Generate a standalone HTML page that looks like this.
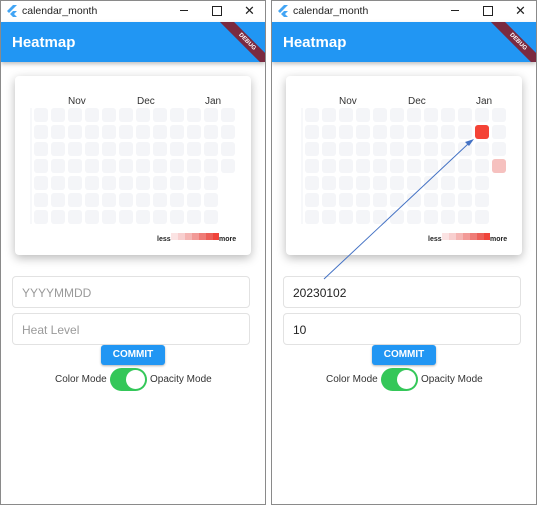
<!DOCTYPE html>
<html><head><style>
*{margin:0;padding:0;box-sizing:border-box}
body{width:540px;height:505px;background:#fff;position:relative;overflow:hidden;font-family:"Liberation Sans",sans-serif}
.win{position:absolute;top:0;width:266px;height:505px;border:1px solid #8a8a8a;background:#fff;overflow:hidden}
.tb{position:absolute;left:0;top:0;width:100%;height:21px;background:#fff;font-size:10.5px;color:#222}
.tb .t{position:absolute;left:21px;top:4px}
.app{position:absolute;left:0;top:21px;width:100%;height:40px;background:#2196F3;box-shadow:0 2px 4px rgba(0,0,0,.25)}
.clip{position:absolute;left:0;top:0;width:100%;height:40px;overflow:hidden}
.app .h{position:absolute;left:11px;top:12px;color:#fff;font-size:15px;font-weight:bold}
.ribbon{position:absolute;left:208px;top:15px;width:76px;height:10px;background:#7a2a40;transform:rotate(45deg);color:#fff;font-size:6px;font-weight:bold;text-align:center;line-height:10px}
.card{position:absolute;left:14px;top:75px;width:236px;height:179px;background:#fff;border-radius:4px;box-shadow:0 3px 10px rgba(0,0,0,.28)}
.in{position:absolute;left:11px;width:238px;height:32px;border:1px solid #e2e2e2;border-radius:4px;font-size:12px;color:#9a9a9a;padding:9px 0 0 9px}
.btn{position:absolute;left:100px;top:344px;width:64px;height:20px;background:#2196F3;border-radius:3px;color:#fff;font-size:10px;font-weight:bold;text-align:center;line-height:20px;box-shadow:0 1px 2px rgba(0,0,0,.3)}
.tg{position:absolute;top:373px;font-size:10px;color:#333}
.sw{position:absolute;left:109px;top:367px;width:37px;height:23px;border-radius:12px;background:#34c759}
.sw i{position:absolute;right:2px;top:2px;width:19px;height:19px;border-radius:50%;background:#fff}
</style></head><body>

<div class="win" style="left:0">
 <div class="tb"><svg style="position:absolute;left:6px;top:4px" width="10" height="12"><path d="M6 0L0 6l2 2 8-8z M6 6L3 9l3 3h4L7 9l3-3z" fill="#42a5f5"/></svg><span class="t">calendar_month</span>
 <span style="position:absolute;left:179px;top:9px;width:8px;height:1px;background:#222"></span><span style="position:absolute;left:211px;top:5px;width:10px;height:10px;border:1.2px solid #222"></span><span style="position:absolute;left:243px;top:2px;font-size:13px">✕</span></div>
 <div class="app"><div class="clip"><div class="h">Heatmap</div><div class="ribbon">DEBUG</div></div></div>
 <div class="card"></div>
 <svg style="position:absolute;left:0;top:0" width="266" height="260">
  <defs><pattern id="p1" x="33" y="107" width="17" height="17" patternUnits="userSpaceOnUse"><rect width="14" height="14" rx="3" fill="#f4f5f8"/></pattern></defs>
  <rect x="33" y="107" width="187" height="119" fill="url(#p1)"/>
  <rect x="220" y="107" width="17" height="68" fill="url(#p1)"/>
  <rect x="29" y="107" width="2" height="116" fill="#f7f8fa"/>
  <text x="67" y="103" font-size="10" fill="#333" font-family="Liberation Sans">Nov</text>
  <text x="136" y="103" font-size="10" fill="#333" font-family="Liberation Sans">Dec</text>
  <text x="204" y="103" font-size="10" fill="#333" font-family="Liberation Sans">Jan</text>
  <text x="156" y="240" font-size="7" font-weight="bold" fill="#222" font-family="Liberation Sans">less</text>
  <rect x="170" y="232" width="8" height="7" fill="#fbe3e3"/><rect x="177" y="232" width="7" height="7" fill="#f8cfcf"/><rect x="184" y="232" width="7" height="7" fill="#f5b5b3"/><rect x="191" y="232" width="7" height="7" fill="#f29a97"/><rect x="198" y="232" width="7" height="7" fill="#ef7c77"/><rect x="205" y="232" width="7" height="7" fill="#ec5f58"/><rect x="212" y="232" width="6" height="7" fill="#f0443b"/>
  <text x="218" y="240" font-size="7" font-weight="bold" fill="#222" font-family="Liberation Sans">more</text>
 </svg>
 <div class="in" style="top:275px">YYYYMMDD</div>
 <div class="in" style="top:312px">Heat Level</div>
 <div class="btn">COMMIT</div>
 <div class="tg" style="left:54px">Color Mode</div><div class="sw"><i></i></div><div class="tg" style="left:149px">Opacity Mode</div>
</div>

<div class="win" style="left:271px">
 <div class="tb"><svg style="position:absolute;left:6px;top:4px" width="10" height="12"><path d="M6 0L0 6l2 2 8-8z M6 6L3 9l3 3h4L7 9l3-3z" fill="#42a5f5"/></svg><span class="t">calendar_month</span>
 <span style="position:absolute;left:179px;top:9px;width:8px;height:1px;background:#222"></span><span style="position:absolute;left:211px;top:5px;width:10px;height:10px;border:1.2px solid #222"></span><span style="position:absolute;left:243px;top:2px;font-size:13px">✕</span></div>
 <div class="app"><div class="clip"><div class="h">Heatmap</div><div class="ribbon">DEBUG</div></div></div>
 <div class="card"></div>
 <svg style="position:absolute;left:0;top:0" width="266" height="260">
  <defs><pattern id="p2" x="33" y="107" width="17" height="17" patternUnits="userSpaceOnUse"><rect width="14" height="14" rx="3" fill="#f4f5f8"/></pattern></defs>
  <rect x="33" y="107" width="187" height="119" fill="url(#p2)"/>
  <rect x="220" y="107" width="17" height="68" fill="url(#p2)"/>
  <rect x="29" y="107" width="2" height="116" fill="#f7f8fa"/>
  <rect x="203" y="124" width="14" height="14" rx="3" fill="#f44336"/>
  <rect x="220" y="158" width="14" height="14" rx="3" fill="#f6c1bf"/>
  <text x="67" y="103" font-size="10" fill="#333" font-family="Liberation Sans">Nov</text>
  <text x="136" y="103" font-size="10" fill="#333" font-family="Liberation Sans">Dec</text>
  <text x="204" y="103" font-size="10" fill="#333" font-family="Liberation Sans">Jan</text>
  <text x="156" y="240" font-size="7" font-weight="bold" fill="#222" font-family="Liberation Sans">less</text>
  <rect x="170" y="232" width="8" height="7" fill="#fbe3e3"/><rect x="177" y="232" width="7" height="7" fill="#f8cfcf"/><rect x="184" y="232" width="7" height="7" fill="#f5b5b3"/><rect x="191" y="232" width="7" height="7" fill="#f29a97"/><rect x="198" y="232" width="7" height="7" fill="#ef7c77"/><rect x="205" y="232" width="7" height="7" fill="#ec5f58"/><rect x="212" y="232" width="6" height="7" fill="#f0443b"/>
  <text x="218" y="240" font-size="7" font-weight="bold" fill="#222" font-family="Liberation Sans">more</text>
 </svg>
 <div class="in" style="top:275px;color:#222">20230102</div>
 <div class="in" style="top:312px;color:#222">10</div>
 <div class="btn">COMMIT</div>
 <div class="tg" style="left:54px">Color Mode</div><div class="sw"><i></i></div><div class="tg" style="left:149px">Opacity Mode</div>
 <svg style="position:absolute;left:0;top:0" width="266" height="300"><line x1="52" y1="278" x2="196" y2="143" stroke="#4472c4" stroke-width="1"/><path d="M202 138l-9 3 4 4z" fill="#4472c4"/></svg>
</div>
</body></html>
